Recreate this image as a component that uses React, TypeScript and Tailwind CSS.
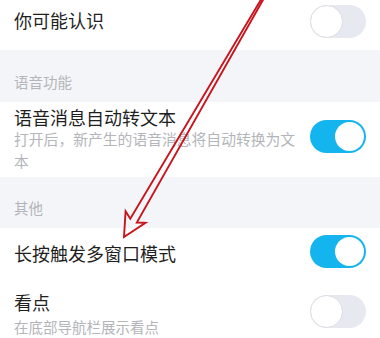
import React from "react";

const font = { fontFamily: '"Noto Sans CJK SC", "Noto Sans", sans-serif' };

const Toggle = ({ on }: { on: boolean }) => (
  <div
    className={
      on
        ? "flex h-[33px] w-[56px] shrink-0 items-center justify-end rounded-full bg-[#14b4ee] px-[2px]"
        : "flex h-[33px] w-[56px] shrink-0 items-center justify-start rounded-full bg-[#e7e9f0]"
    }
  >
    <div
      className={
        on
          ? "h-[29px] w-[29px] rounded-full bg-white"
          : "h-[33px] w-[33px] rounded-full border border-[#dcdde2] bg-white"
      }
    />
  </div>
);

const SectionLabel = ({ text, h, pt }: { text: string; h: string; pt: string }) => (
  <div className={`bg-[#f4f5f8] px-[14px] ${h} ${pt}`}>
    <p className="text-[14.5px] leading-[20px] text-[#b3b5ba]">{text}</p>
  </div>
);

// hand-drawn style hollow arrow pointing at the option
const Arrow = () => {
  const tip = { x: 124, y: 237 };
  const top = { x: 263, y: -2 };
  const len = Math.hypot(top.x - tip.x, top.y - tip.y);
  const d = { x: (top.x - tip.x) / len, y: (top.y - tip.y) / len };
  const n = { x: -d.y, y: d.x };
  const at = (t: number, s: number) => ({
    x: tip.x + d.x * t + n.x * s,
    y: tip.y + d.y * t + n.y * s,
  });
  const pts = [
    at(0, 0),
    at(23, 11.5),
    at(19, 3.8),
    at(len, 0.9),
    at(len, -0.9),
    at(19, -3.8),
    at(23, -11.5),
  ];
  return (
    <svg className="pointer-events-none absolute inset-0" width={380} height={338}>
      <polygon
        points={pts.map((p) => `${p.x.toFixed(1)},${p.y.toFixed(1)}`).join(" ")}
        fill="none"
        stroke="#c8141c"
        strokeWidth={1.9}
        strokeLinejoin="miter"
      />
    </svg>
  );
};

export default function App() {
  return (
    <div className="relative h-[338px] w-[380px] overflow-hidden bg-white" style={font}>
      <div className="flex h-[50px] items-start justify-between pl-[14px] pr-[14px] pt-[5px]">
        <p className="pt-[3px] text-[18px] leading-[24px] text-[#1f1f1f]">你可能认识</p>
        <Toggle on={false} />
      </div>

      <SectionLabel text="语音功能" h="h-[52px]" pt="pt-[22px]" />

      <div className="flex h-[75px] justify-between pl-[14px] pr-[14px]">
        <div className="flex flex-col pt-[4px]">
          <p className="text-[18px] leading-[22px] text-[#1f1f1f]">语音消息自动转文本</p>
          <p className="whitespace-nowrap text-[14.8px] leading-[22px] text-[#b3b5ba]">
            打开后，新产生的语音消息将自动转换为文
          </p>
          <p className="text-[14.8px] leading-[22px] text-[#b3b5ba]">本</p>
        </div>
        <div className="pt-[18px]">
          <Toggle on />
        </div>
      </div>

      <SectionLabel text="其他" h="h-[51px]" pt="pt-[21px]" />

      <div className="flex h-[52px] items-start justify-between pl-[14px] pr-[14px] pt-[7px]">
        <p className="pt-[6px] text-[18px] leading-[24px] text-[#1f1f1f]">长按触发多窗口模式</p>
        <Toggle on />
      </div>

      <div className="flex h-[58px] items-start justify-between pl-[14px] pr-[14px] pt-[15px]">
        <div className="-mt-[5px]">
          <p className="text-[18px] leading-[24px] text-[#1f1f1f]">看点</p>
          <p className="text-[14.5px] leading-[26px] text-[#b3b5ba]">在底部导航栏展示看点</p>
        </div>
        <Toggle on={false} />
      </div>

      <Arrow />
    </div>
  );
}
